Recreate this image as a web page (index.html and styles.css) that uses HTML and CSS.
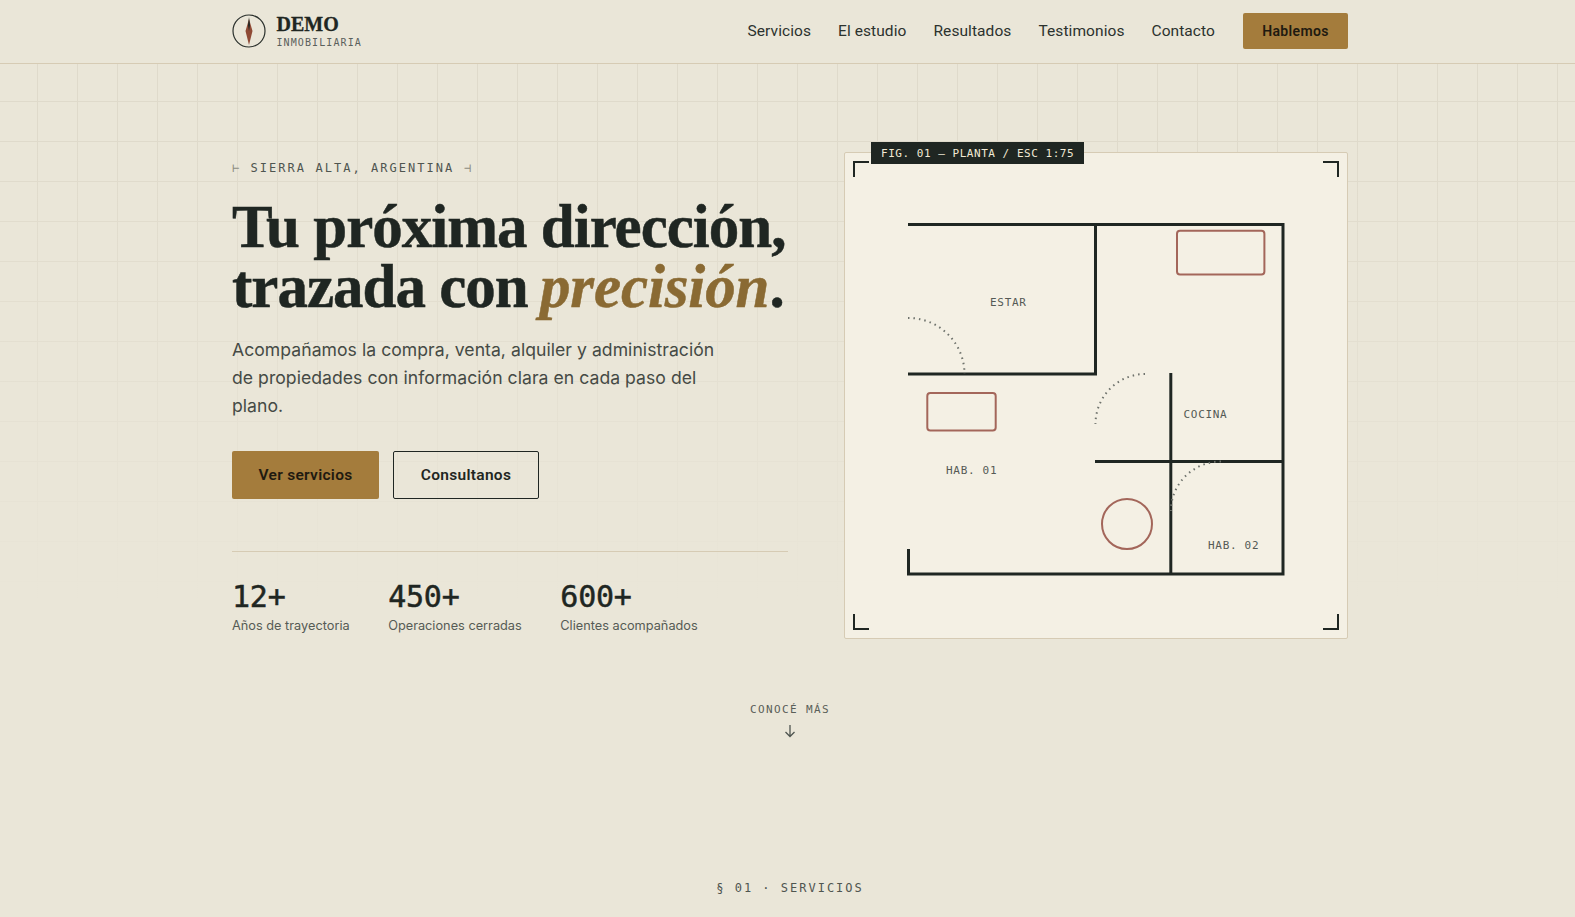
FILE: index.html
```html
<!DOCTYPE html>
<html lang="es">

<head>
	<meta charset="utf-8">
	<title>Demo Inmobiliaria</title>
	<link rel="stylesheet" href="styles.css">
</head>

<body>
	<header class="site-header">
		<div class="wrap header-row">
			<a class="brand" href="#">
				<svg class="brand-mark" viewBox="0 0 34 34" width="34" height="34">
					<circle cx="17" cy="17" r="16" fill="none" stroke="#2a302c" stroke-width="1.2" />
					<polygon points="17,5 20.5,17 17,31 13.5,17" fill="#8f4a35" />
					<polygon points="17,3 18,11 17,17 16,11" fill="#1f2622" />
				</svg>
				<span class="brand-text">
					<span class="brand-name">DEMO</span>
					<span class="brand-sub">INMOBILIARIA</span>
				</span>
			</a>
			<nav class="main-nav">
				<a href="#">Servicios</a>
				<a href="#">El estudio</a>
				<a href="#">Resultados</a>
				<a href="#">Testimonios</a>
				<a href="#">Contacto</a>
			</nav>
			<a class="btn btn-gold btn-small" href="#">Hablemos</a>
		</div>
	</header>

	<section class="hero">
		<div class="wrap hero-grid">
			<div class="hero-copy">
				<p class="eyebrow"><span class="eyebrow-tick">⊢</span> SIERRA ALTA, ARGENTINA <span class="eyebrow-tick">⊣</span></p>
				<h1>Tu próxima dirección,<br>trazada con <em>precisión</em>.</h1>
				<p class="lead">Acompañamos la compra, venta, alquiler y administración<br>de propiedades con información clara en cada paso del<br>plano.</p>
				<div class="hero-actions">
					<a class="btn btn-gold" href="#">Ver servicios</a>
					<a class="btn btn-outline" href="#">Consultanos</a>
				</div>
				<div class="stats">
					<div class="stat">
						<div class="stat-num">12+</div>
						<div class="stat-label">Años de trayectoria</div>
					</div>
					<div class="stat">
						<div class="stat-num">450+</div>
						<div class="stat-label">Operaciones cerradas</div>
					</div>
					<div class="stat">
						<div class="stat-num">600+</div>
						<div class="stat-label">Clientes acompañados</div>
					</div>
				</div>
			</div>

			<figure class="plan">
				<figcaption class="plan-tag">FIG. 01 — PLANTA / ESC 1:75</figcaption>
				<span class="corner corner-tl"></span>
				<span class="corner corner-tr"></span>
				<span class="corner corner-bl"></span>
				<span class="corner corner-br"></span>
				<svg class="plan-svg" viewBox="845 153 502 485">
					<!-- muros -->
					<g class="walls">
						<path d="M908 224.5H1283V574H908.5V549" />
						<path d="M1095.5 224.5V374H908" />
						<path d="M1170.8 373V574" />
						<path d="M1095 461.5H1283" />
					</g>
					<!-- muebles -->
					<g class="furniture">
						<rect x="1177" y="230.8" width="87.4" height="43.6" rx="3" />
						<rect x="927.3" y="393" width="68.4" height="37.4" rx="3" />
						<circle cx="1127" cy="524" r="25" />
					</g>
					<!-- puertas -->
					<g class="doors">
						<path d="M908 318A56 56 0 0 1 964.5 374" />
						<path d="M1145 374A50 50 0 0 0 1095.5 424" />
						<path d="M1221 461.5A50 50 0 0 0 1170.8 511" />
					</g>
					<g class="room-labels">
						<text x="990" y="306">ESTAR</text>
						<text x="1183.5" y="418">COCINA</text>
						<text x="946" y="474">HAB. 01</text>
						<text x="1208" y="549">HAB. 02</text>
					</g>
				</svg>
			</figure>
		</div>

		<a class="scroll-cue" href="#">
			<span>CONOCÉ MÁS</span>
			<svg viewBox="0 0 12 14" width="12" height="14">
				<path d="M6 1V12.5M1.5 8L6 12.5L10.5 8" fill="none" stroke="#4f5550" stroke-width="1.3" />
			</svg>
		</a>
	</section>

	<section class="services">
		<p class="section-label">§ 01 · SERVICIOS</p>
	</section>
</body>

</html>
```

FILE: styles.css
```css
* {
	box-sizing: border-box;
}

body {
	margin: 0;
	background-color: #eae6d8;
	color: #1f2622;
	font-family: Inter, "Open Sans", sans-serif;
}

a {
	color: inherit;
	text-decoration: none;
}

.wrap {
	width: 1116px;
	margin-left: 232px;
}

/* Cabecera */
.site-header {
	height: 64px;
	border-bottom: 1px solid #d6cbb4;
}

.header-row {
	display: flex;
	align-items: center;
	height: 62px;
}

.brand {
	display: flex;
	align-items: center;
	gap: 11px;
	margin-right: auto;
}

.brand-mark {
	display: block;
	margin-left: -0.5px;
}

.brand-text {
	display: flex;
	flex-direction: column;
	gap: 2.5px;
	margin-top: 1px;
}

.brand-name {
	font-family: "Liberation Serif", serif;
	font-weight: 700;
	font-size: 20px;
	line-height: 20px;
	-webkit-text-stroke: 0.3px #1f2622;
}

.brand-sub {
	font-family: "DejaVu Sans Mono", monospace;
	font-size: 10px;
	line-height: 12px;
	letter-spacing: 1.1px;
	color: #5a605c;
}

.main-nav {
	display: flex;
	gap: 27px;
	margin-right: 28px;
	font-family: Roboto, sans-serif;
	font-size: 15.5px;
	letter-spacing: 0.08px;
	color: #2c322e;
}

/* Botones */
.btn {
	display: inline-flex;
	align-items: center;
	justify-content: center;
	height: 48px;
	border-radius: 2px;
	font-family: Roboto, sans-serif;
	font-weight: 600;
	font-size: 15.5px;
	letter-spacing: 0.3px;
}

.btn-gold {
	width: 147px;
	background-color: #a47c3c;
	color: #1f1a10;
}

.btn-outline {
	width: 146px;
	border: 1px solid #1f2622;
}

.btn-small {
	width: 105px;
	height: 36px;
	font-size: 14px;
	letter-spacing: 0.35px;
}

/* Hero */
.hero {
	height: 748px;
	padding-top: 88px;
	background-image:
		linear-gradient(to bottom, rgba(234, 230, 216, 0) 80px, #eae6d8 548px),
		linear-gradient(to right, #dfdacb 1px, transparent 1px),
		linear-gradient(to bottom, #dfdacb 1px, transparent 1px);
	background-size: 100% 100%, 40px 100%, 100% 40px;
	background-position: 0 0, 37px 0, 0 37px;
}

.hero-grid {
	display: grid;
	grid-template-columns: 556px 1fr;
	gap: 56px;
}

.hero-copy {
	min-width: 0;
}

.eyebrow {
	margin: 8px 0 0;
	font-family: "DejaVu Sans Mono", monospace;
	font-size: 12px;
	line-height: 16px;
	letter-spacing: 2.04px;
	color: #4f5550;
}

.eyebrow-tick {
	color: #8d8d82;
}

h1 {
	margin: 21px 0 0;
	font-family: "Liberation Serif", serif;
	font-weight: 700;
	font-size: 61px;
	line-height: 60px;
	letter-spacing: -1px;
	white-space: nowrap;
	-webkit-text-stroke: 0.5px #1f2622;
}

h1 em {
	margin-left: -2px;
	letter-spacing: -0.1px;
	color: #8a6a33;
	-webkit-text-stroke: 0.5px #8a6a33;
}

.lead {
	margin: 19px 0 0;
	font-size: 17.6px;
	line-height: 28px;
	letter-spacing: 0.04px;
	color: #454a45;
	white-space: nowrap;
}

.hero-actions {
	display: flex;
	gap: 14px;
	margin-top: 31px;
}

.stats {
	display: flex;
	gap: 38.5px;
	margin-top: 52px;
	padding-top: 27px;
	border-top: 1px solid #d6cbb4;
}

.stat-num {
	font-family: "DejaVu Sans Mono", monospace;
	font-size: 30px;
	line-height: 36px;
	letter-spacing: -0.2px;
	-webkit-text-stroke: 0.5px #1f2622;
}

.stat-label {
	margin-top: 2px;
	font-size: 12.75px;
	line-height: 18px;
	color: #565b55;
}

/* Plano */
.plan {
	position: relative;
	height: 487px;
	margin: 0;
	background-color: #f4f0e4;
	border: 1px solid #d6cbb4;
	border-radius: 2px;
}

.plan-tag {
	position: absolute;
	top: -11px;
	left: 26px;
	padding: 0 10px;
	height: 22px;
	background-color: #1f2622;
	color: #f0e9d5;
	font-family: "DejaVu Sans Mono", monospace;
	font-size: 11px;
	line-height: 23px;
	letter-spacing: 0.53px;
	white-space: nowrap;
}

.corner {
	position: absolute;
	width: 16px;
	height: 16px;
	border: 0 solid #1f2622;
}

.corner-tl {
	top: 8px;
	left: 8px;
	border-width: 2px 0 0 2px;
}

.corner-tr {
	top: 8px;
	right: 8px;
	border-width: 2px 2px 0 0;
}

.corner-bl {
	bottom: 8px;
	left: 8px;
	border-width: 0 0 2px 2px;
}

.corner-br {
	bottom: 8px;
	right: 8px;
	border-width: 0 2px 2px 0;
}

.plan-svg {
	display: block;
	width: 100%;
	height: 100%;
}

.walls path {
	fill: none;
	stroke: #1f2622;
	stroke-width: 3;
}

.furniture rect,
.furniture circle {
	fill: none;
	stroke: #a3665a;
	stroke-width: 2;
}

.doors path {
	fill: none;
	stroke: #6e726c;
	stroke-width: 2;
	stroke-dasharray: 1.5 4;
}

.room-labels text {
	font-family: "DejaVu Sans Mono", monospace;
	font-size: 11px;
	letter-spacing: 0.7px;
	fill: #555a55;
}

/* Bajada */
.scroll-cue {
	display: flex;
	flex-direction: column;
	align-items: center;
	gap: 7px;
	width: 1116px;
	margin: 64px 0 0 232px;
	font-family: "DejaVu Sans Mono", monospace;
	font-size: 11px;
	line-height: 14px;
	letter-spacing: 1.4px;
	color: #5a5f58;
}

.section-label {
	width: 1116px;
	margin: 68px 0 0 232px;
	text-align: center;
	font-family: "DejaVu Sans Mono", monospace;
	font-size: 12px;
	line-height: 16px;
	letter-spacing: 2px;
	color: #4f5550;
}
```
